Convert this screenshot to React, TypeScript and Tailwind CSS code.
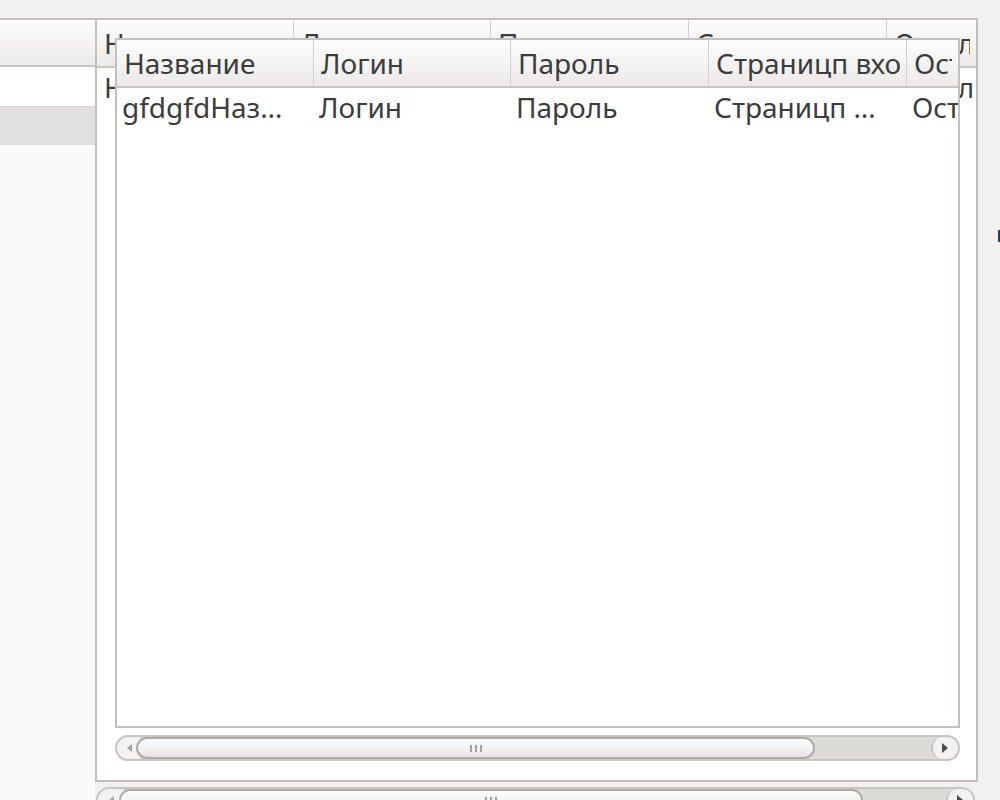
import React from "react";

const COLS = ["Название", "Логин", "Пароль", "Страницп вход", "Остальное"];

function Scrollbar({ width, sliderLeft, sliderWidth, capRight }: { width: number; sliderLeft: number; sliderWidth: number; capRight: number }) {
    const rest = width - sliderLeft - sliderWidth - capRight;
    return (
        <div className="flex h-[26px] shrink-0 items-stretch rounded-full border-2 border-[#c8c5c0] bg-[#dedcd9] overflow-hidden" style={{ width }}>
            <div className="flex items-center justify-center rounded-l-full bg-[#f3f2f1] shrink-0" style={{ width: sliderLeft - 2 }}>
                <div className="ml-[2px] h-0 w-0 border-y-[4px] border-r-[5px] border-y-transparent border-r-[#a8a6a2]" />
            </div>
            <div className="relative -ml-[4px] flex items-center justify-center rounded-full border-2 border-[#aeaba6] bg-gradient-to-b from-[#fdfdfd] via-[#f4f3f2] to-[#e6e5e3] shrink-0" style={{ width: sliderWidth + 4 }}>
                <div className="flex gap-[3px]">
                    <div className="h-[7px] w-[2px] bg-[#a3a19d]" />
                    <div className="h-[7px] w-[2px] bg-[#a3a19d]" />
                    <div className="h-[7px] w-[2px] bg-[#a3a19d]" />
                </div>
            </div>
            <div className="bg-[#dcdad7] shrink-0" style={{ width: rest - 4 }} />
            <div className="flex items-center justify-center rounded-full border-l-2 border-[#c8c5c0] bg-[#f3f2f1] shrink-0 grow">
                <div className="mr-[2px] h-0 w-0 border-y-[5px] border-l-[6px] border-y-transparent border-l-[#4a4a4a]" />
            </div>
        </div>
    );
}

function HeaderCells({ widths }: { widths: number[] }) {
    return (
        <div className="flex h-[48px] shrink-0 border-b-2 border-[#c9c6c2] bg-gradient-to-b from-[#fdfdfd] to-[#ebeae8]">
            {COLS.map((c, i) => (
                <div
                    key={c}
                    className={`flex items-center overflow-hidden whitespace-nowrap pl-[7px] pr-[6px] ${i < widths.length ? "border-r border-[#d3d1ce] shrink-0" : "flex-1"}`}
                    style={i < widths.length ? { width: widths[i] } : undefined}
                >
                    <span className="block overflow-hidden leading-[40px]">{c}</span>
                </div>
            ))}
        </div>
    );
}

function Row({ cells, widths, pad }: { cells: string[]; widths: number[]; pad: string }) {
    return (
        <div className="flex h-[39px] shrink-0">
            {cells.map((c, i) => (
                <div
                    key={i}
                    className={`overflow-hidden whitespace-nowrap leading-[39px] ${pad} ${i < widths.length ? "shrink-0" : "flex-1"}`}
                    style={i < widths.length ? { width: widths[i] } : undefined}
                >
                    {c}
                </div>
            ))}
        </div>
    );
}

export default function App() {
    const widths = [197, 197, 198, 198];

    return (
        <div className="flex h-[800px] w-[1000px] overflow-hidden bg-[#f2f1f0] pt-[18px] font-['Noto_Sans',sans-serif] text-[28px] leading-none text-[#3c3c3c]">
            {/* left list */}
            <div className="flex w-[95px] shrink-0 flex-col border-t-2 border-[#c3c0bb] bg-[#fafafa]">
                <div className="h-[47px] shrink-0 border-b-2 border-[#c9c6c2] bg-gradient-to-b from-[#fdfdfd] to-[#ebeae8]" />
                <div className="h-[39px] shrink-0 bg-white" />
                <div className="h-[39px] shrink-0 border-t border-[#d6d5d3] bg-[#e1e0de]" />
                <div className="flex-1 bg-[#fafafa]" />
            </div>

            {/* back table */}
            <div className="relative flex w-[883px] shrink-0 flex-col">
                <div className="flex h-[764px] shrink-0 flex-col border-2 border-[#c3c0bb] bg-white">
                    <HeaderCells widths={widths} />
                    <Row cells={COLS} widths={widths} pad="pl-[7px]" />
                </div>
                <div className="mt-[5px] ml-[1px]">
                    <Scrollbar width={879} sliderLeft={27} sliderWidth={740} capRight={25} />
                </div>

                {/* front table, lies over the back one */}
                <div className="absolute left-[20px] top-[20px] flex w-[845px] flex-col">
                    <div className="flex h-[690px] flex-col border-2 border-[#c3c0bb] bg-white">
                        <HeaderCells widths={widths} />
                        <Row cells={["gfdgfdНаз…", "Логин", "Пароль", "Страницп …", "Остальное"]} widths={widths} pad="pl-[5px]" />
                    </div>
                    <div className="mt-[7px]">
                        <Scrollbar width={845} sliderLeft={25} sliderWidth={675} capRight={25} />
                    </div>
                </div>
            </div>

            {/* right strip */}
            <div className="flex flex-1 flex-col items-end pt-[212px]">
                <div className="h-[12px] w-[2px] bg-[#2c3e5a]" />
            </div>
        </div>
    );
}
